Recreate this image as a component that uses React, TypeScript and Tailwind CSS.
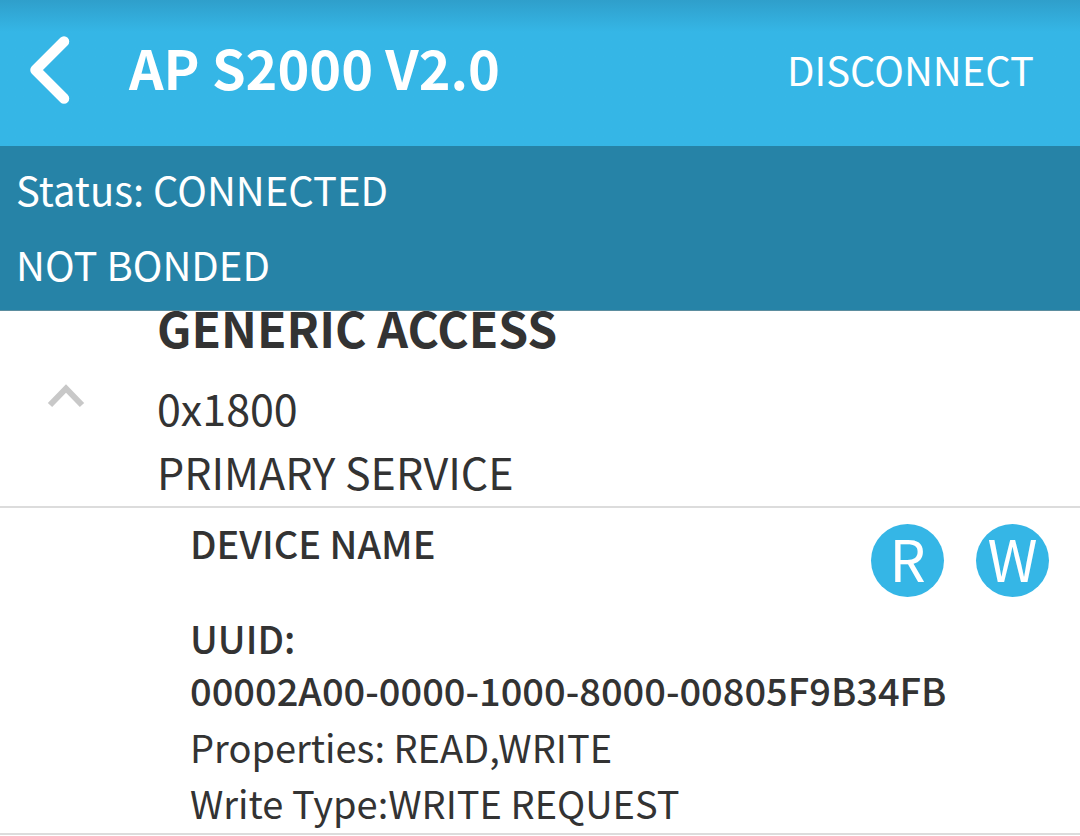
import React from 'react';

interface Characteristic {
  name: string;
  uuid: string;
  properties: string;
  writeType: string;
}

const characteristic: Characteristic = {
  name: 'DEVICE NAME',
  uuid: '00002A00-0000-1000-8000-00805F9B34FB',
  properties: 'READ,WRITE',
  writeType: 'WRITE REQUEST',
};

function RoundButton({ label, letter }: { label: string; letter: string }) {
  return (
    <button
      aria-label={label}
      className="flex h-[73px] w-[73px] items-center justify-center rounded-full bg-[#35b6e6] pb-[6px] text-[57px] leading-none text-white"
    >
      {letter}
    </button>
  );
}

function Header() {
  return (
    <header className="flex h-[146px] items-center bg-[#35b6e6] bg-linear-to-b from-[#2f9fcb] to-[#35b6e6] to-[32px] pr-[46px] pb-[6px] pl-[28px] text-white">
      <button aria-label="Back" className="shrink-0">
        <svg width="44" height="70" viewBox="0 0 44 70" fill="none">
          <path
            d="M36 6.5 7.5 35 36 63.5"
            stroke="currentColor"
            strokeWidth="10.5"
            strokeLinecap="round"
            strokeLinejoin="round"
          />
        </svg>
      </button>
      <h1 className="ml-[57px] flex-1 pb-[6px] text-[54px] leading-none font-bold">AP S2000 V2.0</h1>
      <button className="pb-[2px] text-[40px] leading-none">DISCONNECT</button>
    </header>
  );
}

function ConnectionStatus() {
  return (
    <section className="border-b border-[#5b8d9f] bg-[#2683a7] px-4 pt-[6px] pb-[8px] text-[40px] leading-[75px] text-white">
      <p>Status: CONNECTED</p>
      <p>NOT BONDED</p>
    </section>
  );
}

export default function App() {
  return (
    <div className="min-h-screen bg-white font-['Noto_Sans_CJK_SC',sans-serif] text-[#333333]">
      <Header />
      <ConnectionStatus />

      <main>
        {/* Service */}
        <section className="flex border-b-2 border-[#dcdcdc] pb-[3px]">
          <button aria-label="Collapse service" className="w-[157px] shrink-0 pb-[22px] pl-[47px]">
            <svg width="38" height="26" viewBox="0 0 38 26" fill="none">
              <path d="M3 22 19 5.5 35 22" stroke="#c8c8c8" strokeWidth="6" />
            </svg>
          </button>
          <div className="text-[43px] leading-[64px]">
            <h2 className="mb-[32px] text-[48px] leading-[32px] font-bold">GENERIC ACCESS</h2>
            <p>0x1800</p>
            <p>PRIMARY SERVICE</p>
          </div>
        </section>

        {/* Characteristic */}
        <section className="flex items-start border-b-2 border-[#dcdcdc] pt-2 pr-[31px] pb-[2px] pl-[190px] text-[38px] leading-[56px]">
          <div className="min-w-0 flex-1 pt-px">
            <h3 className="leading-[52px] font-medium">{characteristic.name}</h3>
            <div className="mt-[43px] mb-[3px] leading-[52px] font-medium">
              <p>UUID:</p>
              <p className="whitespace-nowrap">{characteristic.uuid}</p>
            </div>
            <p>Properties: {characteristic.properties}</p>
            <p>Write Type:{characteristic.writeType}</p>
          </div>
          <div className="mt-2 flex gap-8">
            <RoundButton label="Read" letter="R" />
            <RoundButton label="Write" letter="W" />
          </div>
        </section>
      </main>
    </div>
  );
}
